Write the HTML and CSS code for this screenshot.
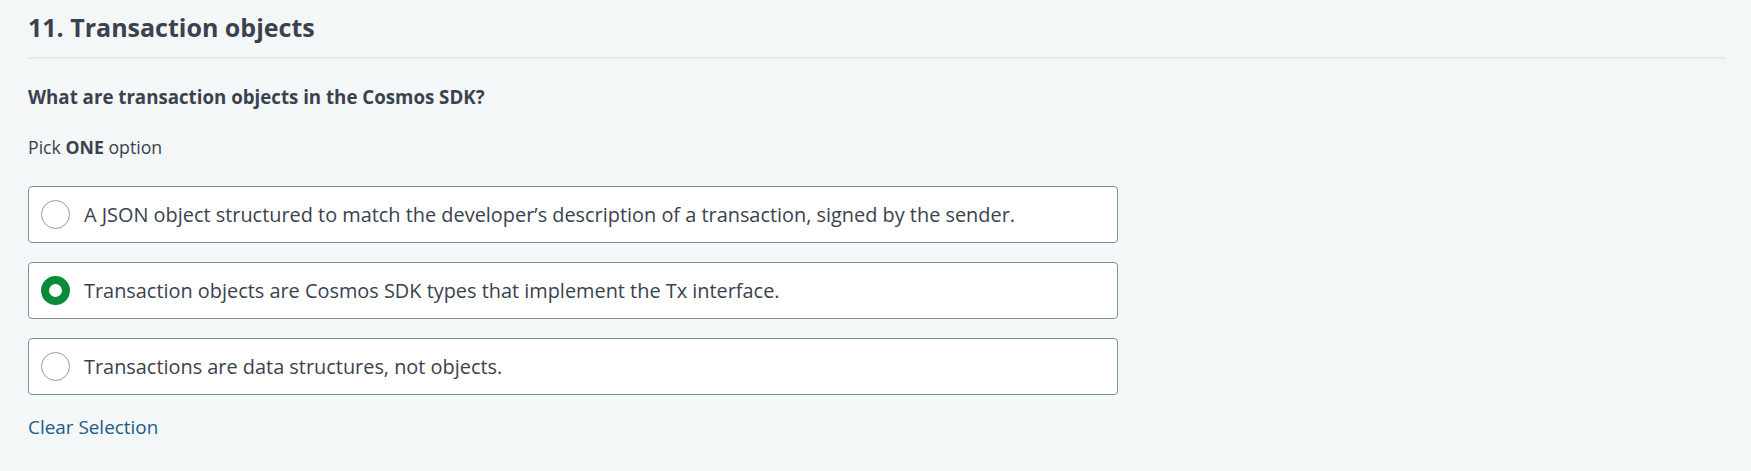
FILE: index.html
```html
<!DOCTYPE html>
<html lang="en">
<head>
<meta charset="utf-8">
<title>Transaction objects</title>
<link rel="stylesheet" href="styles.css">
</head>
<body>
<main class="question">
  <h1 class="q-title">11. Transaction objects</h1>
  <div class="q-body">
    <p class="q-text">What are transaction objects in the Cosmos SDK?</p>
    <p class="q-hint">Pick <strong>ONE</strong> option</p>
    <ul class="options">
      <li class="option"><span class="radio"></span><span class="opt-label">A JSON object structured to match the developer’s description of a transaction, signed by the sender.</span></li>
      <li class="option"><span class="radio radio-checked"></span><span class="opt-label">Transaction objects are Cosmos SDK types that implement the Tx interface.</span></li>
      <li class="option"><span class="radio"></span><span class="opt-label">Transactions are data structures, not objects.</span></li>
    </ul>
    <a class="clear-link" href="#">Clear Selection</a>
  </div>
</main>
</body>
</html>
```
FILE: styles.css
```css
html, body {
  margin: 0;
  padding: 0;
  background: #f3f7f7;
}
body {
  font-family: "Open Sans", "Liberation Sans", sans-serif;
  color: #39424e;
}
.question {
  padding: 0 25px 0 28px;
}
.q-title {
  margin: 0;
  padding: 9px 0 12px;
  font-size: 25px;
  font-weight: 700;
  line-height: 36px;
  border-bottom: 2px solid #e4ebeb;
}
.q-body {
  padding-top: 24px;
}
.q-text {
  margin: 0;
  font-size: 18.7px;
  font-weight: 700;
  line-height: 28px;
}
.q-hint {
  margin: 23px 0 0;
  font-size: 17.7px;
  line-height: 26px;
}
.q-hint strong {
  font-weight: 700;
}
.options {
  list-style: none;
  margin: 26px 0 0;
  padding: 0;
  width: 1090px;
  display: flex;
  flex-direction: column;
  gap: 19px;
}
.option {
  display: flex;
  align-items: center;
  gap: 14px;
  height: 57px;
  box-sizing: border-box;
  padding: 0 12px;
  background: #fff;
  border: 1px solid #7d9397;
  border-radius: 4px;
  font-size: 19.9px;
}
.radio {
  flex: none;
  width: 29px;
  height: 29px;
  box-sizing: border-box;
  border: 1px solid #8a9ea2;
  border-radius: 50%;
  background: #fff;
}
.radio-checked {
  border: 8px solid #0b8a3a;
}
.clear-link {
  display: inline-block;
  margin-top: 19px;
  font-size: 18.9px;
  line-height: 26px;
  color: #1e5c86;
  text-decoration: none;
}
```
